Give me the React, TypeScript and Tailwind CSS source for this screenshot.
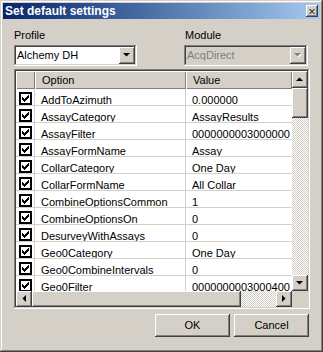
const FONT = { fontFamily: '"Liberation Sans", Arial, sans-serif' }

const rows: [string, string][] = [
  ['AddToAzimuth', '0.000000'],
  ['AssayCategory', 'AssayResults'],
  ['AssayFilter', '0000000003000000'],
  ['AssayFormName', 'Assay'],
  ['CollarCategory', 'One Day'],
  ['CollarFormName', 'All Collar'],
  ['CombineOptionsCommon', '1'],
  ['CombineOptionsOn', '0'],
  ['DesurveyWithAssays', '0'],
  ['Geo0Category', 'One Day'],
  ['Geo0CombineIntervals', '0'],
  ['Geo0Filter', '0000000003000400'],
]

// classic 3d edges
const raised = 'shadow-[inset_-1px_-1px_#404040,inset_1px_1px_#ffffff,inset_-2px_-2px_#808080,inset_2px_2px_#d4d0c8]'
const sunken = 'shadow-[inset_-1px_-1px_#ffffff,inset_1px_1px_#808080,inset_-2px_-2px_#d4d0c8,inset_2px_2px_#404040]'
const checker = 'bg-[repeating-conic-gradient(#d4d0c8_0%_25%,#ffffff_0%_50%)] bg-[length:2px_2px]'

function Arrow({ dir, grey }: { dir: 'up' | 'down' | 'left' | 'right'; grey?: boolean }) {
  const pts = {
    up: '0,4 7,4 3.5,0.5',
    down: '0,0 7,0 3.5,3.5',
    left: '4,0 4,7 0.5,3.5',
    right: '0,0 0,7 3.5,3.5',
  }[dir]
  const w = dir === 'up' || dir === 'down' ? 7 : 4
  const h = dir === 'up' || dir === 'down' ? 4 : 7
  return (
    <svg width={w + 1} height={h + 1} viewBox={`0 0 ${w + 1} ${h + 1}`} className="block">
      {grey && <polygon points={pts} fill="#ffffff" transform="translate(1,1)" />}
      <polygon points={pts} fill={grey ? '#808080' : '#000000'} />
    </svg>
  )
}

function ArrowBtn({ dir, grey, className }: { dir: 'up' | 'down' | 'left' | 'right'; grey?: boolean; className: string }) {
  return (
    <div className={`flex items-center justify-center bg-[#d4d0c8] ${raised} ${className}`}>
      <Arrow dir={dir} grey={grey} />
    </div>
  )
}

function Check() {
  return (
    <div className="w-[13px] h-[13px] border-2 border-[#000000] bg-white flex items-center justify-center">
      <svg width="7" height="7" viewBox="0 0 7 7" className="block">
        <path d="M0 2h1v1h1v1h1v-1h1v-1h1v-1h1v-1h1v3h-1v1h-1v1h-1v1h-1v1h-1v-1h-1v-1h-1z" fill="#000" />
      </svg>
    </div>
  )
}

function Combo({ text, disabled }: { text: string; disabled?: boolean }) {
  return (
    <div className={`relative h-[21px] ${disabled ? 'bg-[#d4d0c8]' : 'bg-white'} ${sunken} flex items-center`}>
      <span className={`pl-[3px] text-[11px] leading-[13px] ${disabled ? 'text-[#808080]' : 'text-black'}`}>{text}</span>
      <ArrowBtn dir="down" grey={disabled} className="absolute right-[2px] top-[2px] w-[16px] h-[17px]" />
    </div>
  )
}

export default function App() {
  return (
    <div
      style={FONT}
      className="w-[323px] h-[352px] bg-[#d4d0c8] p-[3px] shadow-[inset_-1px_-1px_#404040,inset_1px_1px_#d4d0c8,inset_-2px_-2px_#808080,inset_2px_2px_#ffffff] text-[11px] text-black overflow-hidden"
    >
      {/* title bar */}
      <div className="h-[16px] flex items-center justify-between bg-gradient-to-r from-[#0a246a] to-[#a6caf0] pl-[2px] pr-[2px]">
        <span className="text-white font-bold text-[12px] leading-[14px]">Set default settings</span>
        <div className={`w-[12px] h-[12px] bg-[#d4d0c8] ${raised} flex items-center justify-center`}>
          <svg width="6" height="5" viewBox="0 0 6 5" className="block">
            <path d="M0 0h1l2 2l2-2h1v0l-2.5 2.5l2.5 2.5h-1l-2-2l-2 2h-1l2.5-2.5z" fill="#000" />
          </svg>
        </div>
      </div>

      <div className="pl-[11px] pr-[10px]">
        {/* labels + combos */}
        <div className="flex mt-[10px]">
          <div className="w-[123px]">
            <div className="leading-[13px]">Profile</div>
            <div className="mt-[3px]">
              <Combo text="Alchemy DH" />
            </div>
          </div>
          <div className="ml-[47px] w-[124px]">
            <div className="leading-[13px] pl-[1px]">Module</div>
            <div className="mt-[3px]">
              <Combo text="AcqDirect" disabled />
            </div>
          </div>
        </div>

        {/* grid */}
        <div className={`mt-[3px] w-[296px] h-[240px] p-[2px] bg-white ${sunken}`}>
          <div className="flex h-[220px]">
            <div className="w-[276px] flex flex-col overflow-hidden">
              <div className="flex h-[18px] bg-[#d4d0c8] shrink-0">
                <div className="w-[19px] shadow-[inset_1px_1px_#ffffff,inset_-1px_-1px_#808080]" />
                <div className="w-[151px] pl-[7px] pt-[3px] leading-[13px] shadow-[inset_1px_1px_#ffffff,inset_-1px_-1px_#808080]">Option</div>
                <div className="w-[106px] pl-[7px] pt-[3px] leading-[13px] shadow-[inset_1px_1px_#ffffff,inset_-1px_-1px_#808080]">Value</div>
              </div>
              {rows.map(([opt, val]) => (
                <div key={opt} className="flex h-[17px] shrink-0 border-b border-[#d4d0c8]">
                  <div className="w-[19px] border-r border-[#d4d0c8] flex items-end justify-center">
                    <Check />
                  </div>
                  <div className="w-[151px] border-r border-[#d4d0c8] pl-[6px] pt-[5px] leading-[13px] whitespace-nowrap overflow-hidden">{opt}</div>
                  <div className="w-[106px] pl-[6px] pt-[5px] leading-[13px] whitespace-nowrap overflow-hidden">{val}</div>
                </div>
              ))}
            </div>
            {/* vertical scrollbar */}
            <div className={`w-[16px] flex flex-col ${checker}`}>
              <ArrowBtn dir="up" className="h-[17px] shrink-0" />
              <div className={`h-[30px] shrink-0 bg-[#d4d0c8] ${raised}`} />
              <div className="flex-1" />
              <ArrowBtn dir="down" className="h-[16px] shrink-0" />
            </div>
          </div>
          {/* horizontal scrollbar */}
          <div className="flex h-[16px]">
            <div className={`w-[276px] flex ${checker}`}>
              <ArrowBtn dir="left" className="w-[16px] shrink-0" />
              <div className={`w-[209px] shrink-0 bg-[#d4d0c8] ${raised}`} />
              <div className="flex-1" />
              <ArrowBtn dir="right" className="w-[16px] shrink-0" />
            </div>
            <div className="w-[16px] bg-[#d4d0c8]" />
          </div>
        </div>

        {/* buttons */}
        <div className="flex justify-end gap-[4px] mt-[5px] pr-[1px]">
          <button className={`w-[75px] h-[23px] bg-[#d4d0c8] ${raised} text-[11px] leading-[13px]`}>OK</button>
          <button className={`w-[75px] h-[23px] bg-[#d4d0c8] ${raised} text-[11px] leading-[13px]`}>Cancel</button>
        </div>
      </div>
    </div>
  )
}
